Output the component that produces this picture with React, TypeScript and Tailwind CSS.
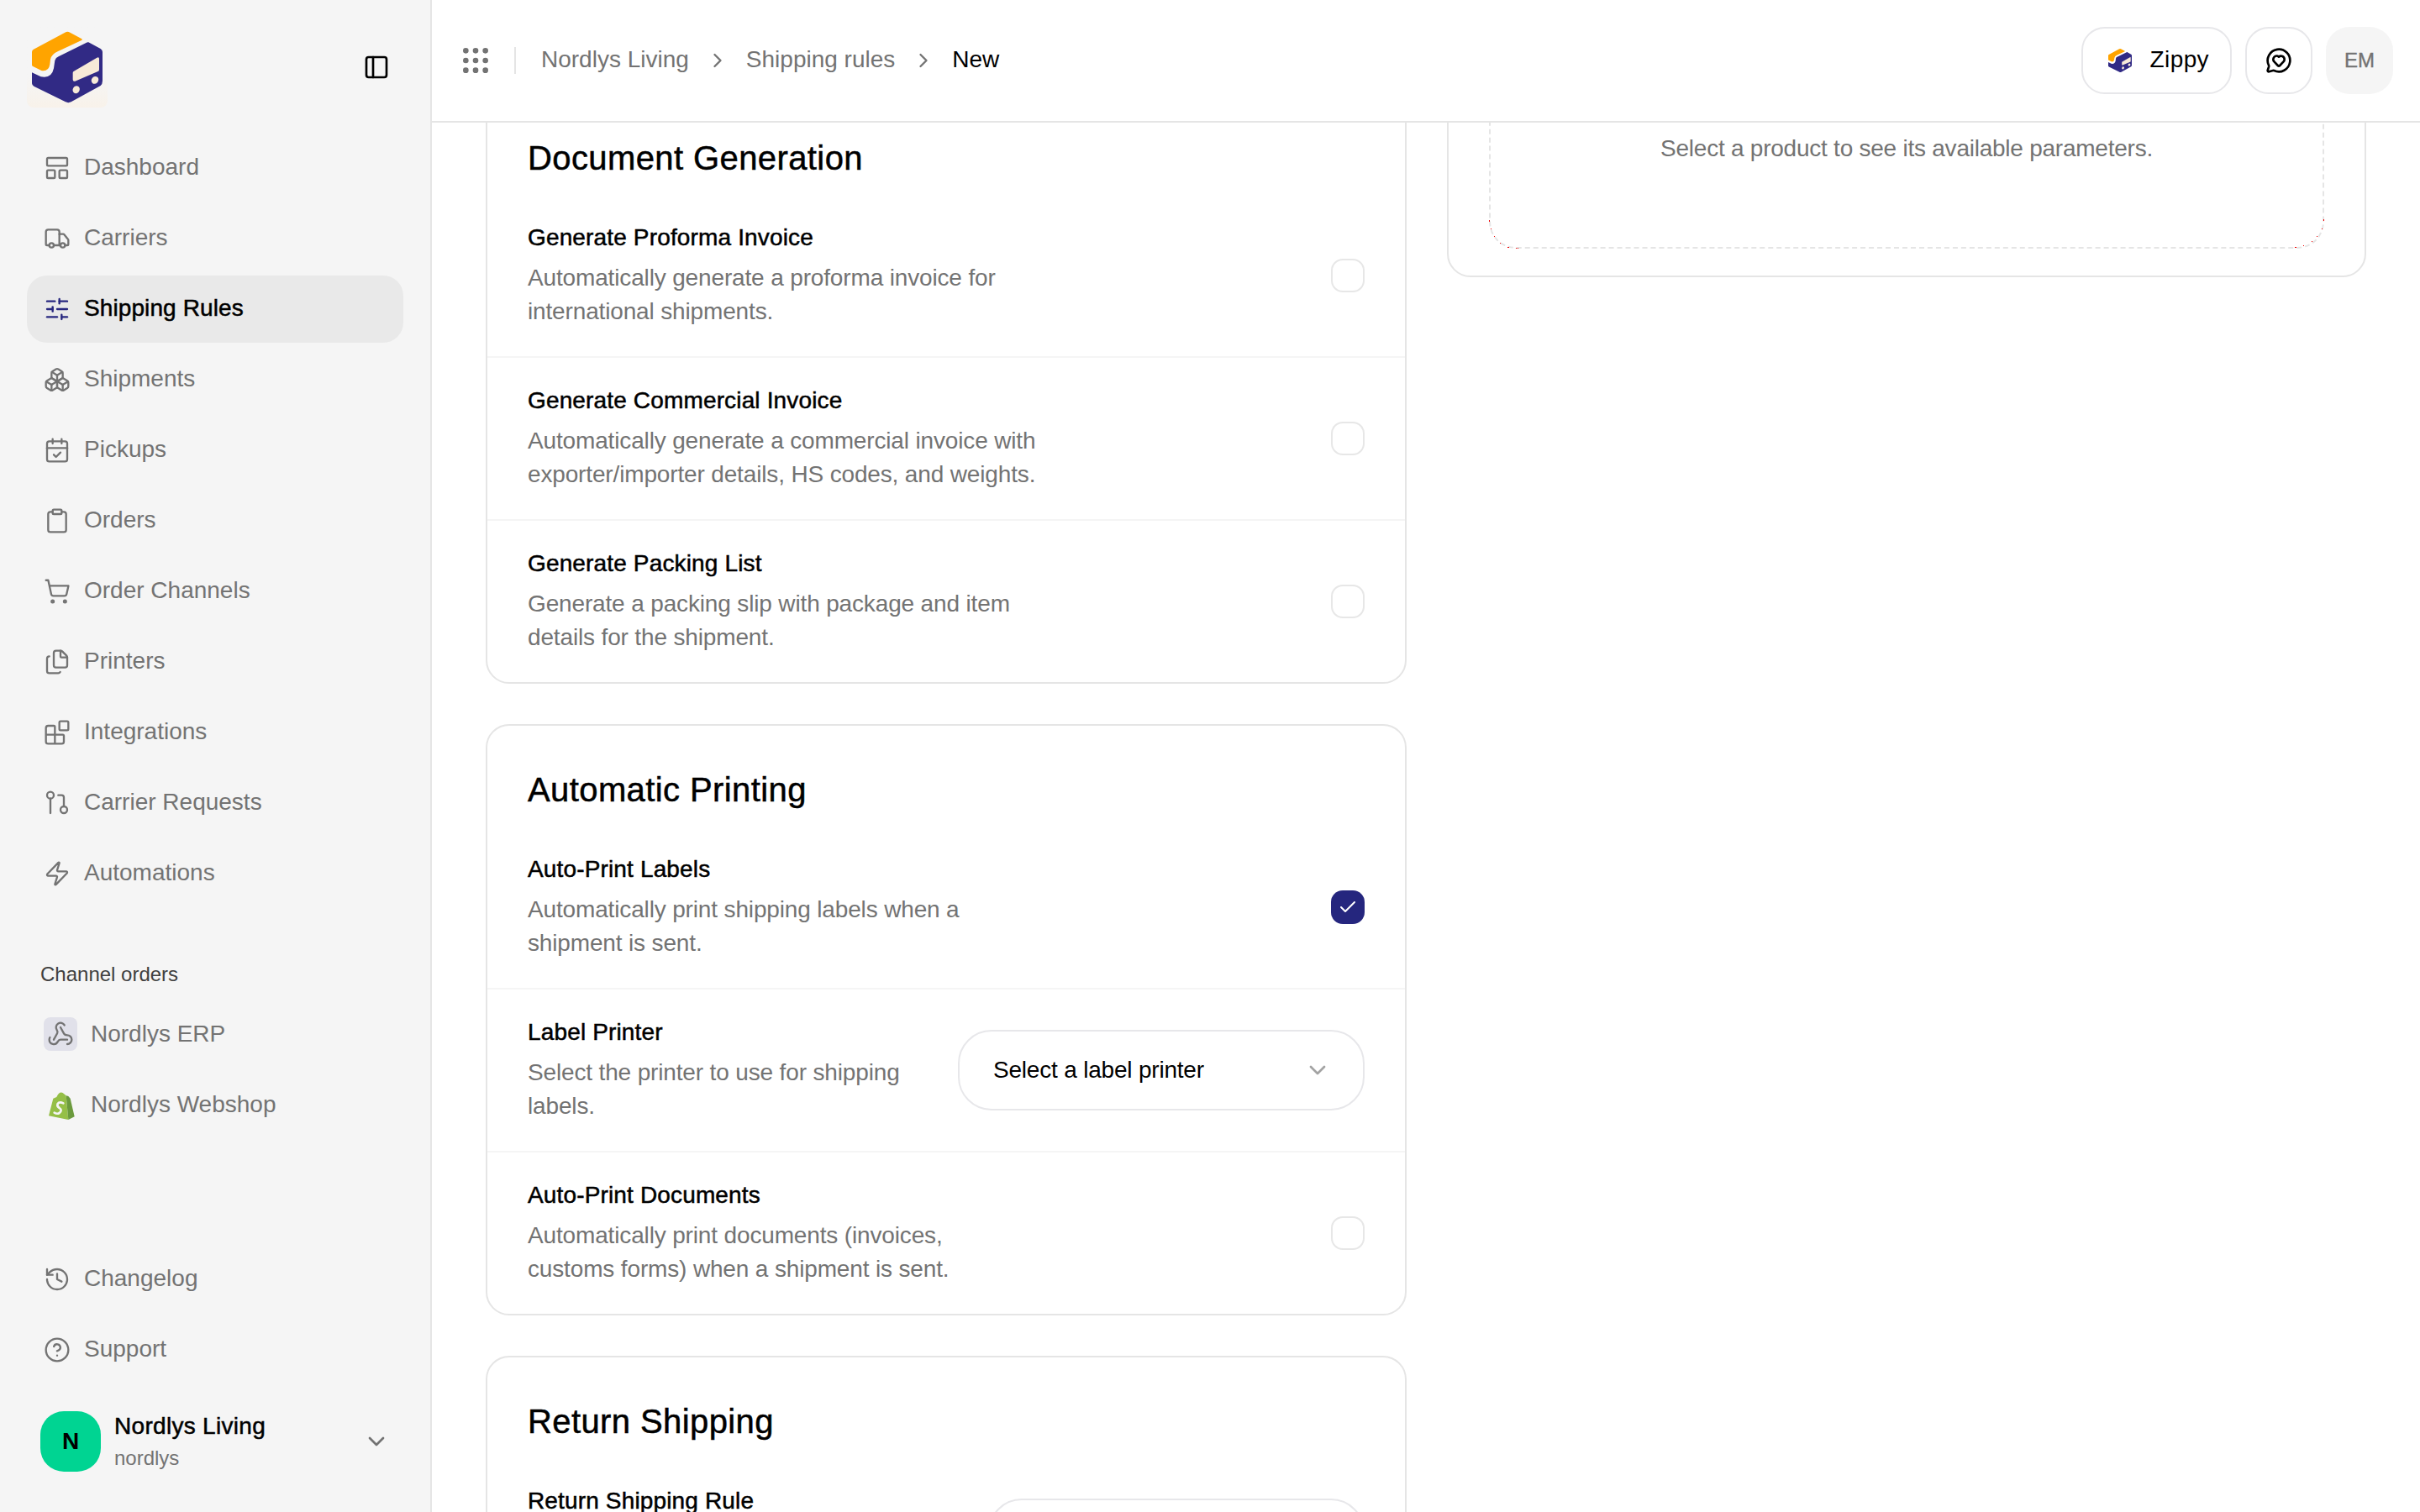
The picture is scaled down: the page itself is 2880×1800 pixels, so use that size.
import {
  Blocks,
  Boxes,
  CalendarCheck,
  Check,
  ChevronDown,
  ChevronRight,
  CircleHelp,
  Clipboard,
  Files,
  Grip,
  History,
  LayoutPanelTop,
  MessageCircleHeart,
  PanelLeft,
  ShoppingCart,
  SlidersHorizontal,
  Truck,
  Webhook,
  Zap,
} from "lucide-react";

const CarrierRequestIcon = ({ size, strokeWidth, className }: { size: number; strokeWidth: number; className?: string }) => (
  <svg width={size} height={size} viewBox="0 0 24 24" fill="none" stroke="currentColor" strokeWidth={strokeWidth} strokeLinecap="round" strokeLinejoin="round" className={className}>
    <circle cx="6" cy="5" r="3" />
    <path d="M6 8v13" />
    <path d="M13 5h3a2 2 0 0 1 2 2v8" />
    <circle cx="18" cy="18" r="3" />
  </svg>
);

const mainNav = [
  { icon: LayoutPanelTop, label: "Dashboard" },
  { icon: Truck, label: "Carriers" },
  { icon: SlidersHorizontal, label: "Shipping Rules", active: true },
  { icon: Boxes, label: "Shipments" },
  { icon: CalendarCheck, label: "Pickups" },
  { icon: Clipboard, label: "Orders" },
  { icon: ShoppingCart, label: "Order Channels" },
  { icon: Files, label: "Printers" },
  { icon: Blocks, label: "Integrations" },
  { icon: CarrierRequestIcon, label: "Carrier Requests" },
  { icon: Zap, label: "Automations" },
];

const documentRows = [
  { title: "Generate Proforma Invoice", text: "Automatically generate a proforma invoice for\ninternational shipments." },
  { title: "Generate Commercial Invoice", text: "Automatically generate a commercial invoice with\nexporter/importer details, HS codes, and weights." },
  { title: "Generate Packing List", text: "Generate a packing slip with package and item\ndetails for the shipment." },
];

const Logo = ({ size }: { size: number }) => (
  <svg width={size} height={size} viewBox="12 12 288 288" className="shrink-0">
    <path fill="#ffa400" d="M36 92 L148 32 Q157 27 166 32 L208 55 Q212 58 207 60 L122 100 Q100 110 96 128 L94 146 Q90 172 64 168 L32 152 Q30 151 30 148 L30 102 Q30 95 36 92 Z" />
    <path fill="#312a85" d="M232 67 L275 90 Q282 95 282 101 L282 205 Q282 216 275 222 L170 280 Q160 285 150 280 L37 224 Q30 220 30 214 L30 175 L62 190 Q100 198 108 160 L112 132 Q115 122 125 118 L222 70 Q228 66 232 67 Z" />
    <path fill="#f7ead8" d="M180 170 L262 122 Q270 118 270 126 L270 165 Q270 170 264 172 L184 206 Q176 208 176 200 L176 176 Q176 172 180 170 Z" />
    <ellipse fill="#f7ead8" cx="188" cy="236" rx="12" ry="14" transform="rotate(30 188 236)" />
    <ellipse fill="#f7ead8" cx="255" cy="202" rx="12" ry="14" transform="rotate(40 255 202)" />
  </svg>
);

const ShopifyLogo = () => (
  <svg width="40" height="40" viewBox="12 12 120 120" className="shrink-0">
    <path fill="#95bf47" d="M30 112 L46 50 L58 45 Q68 24 80 30 L92 40 L100 126 Z" />
    <path fill="#6b9a3d" d="M92 40 L100 42 L107 50 L122 115 L100 126 Z" />
    <path fill="none" stroke="#f5f5f5" strokeWidth="8" strokeLinecap="round" d="M82 67 Q68 60 62 69 Q58 78 68 84 Q80 92 68 102 Q60 107 50 101" />
  </svg>
);

const CornerDots = () => (
  <>
    <svg width="40" height="40" viewBox="0 0 40 40" className="absolute -bottom-0.5 -left-0.5">
      <path fill="#ef0000" d="M0 6h1v2H0zM2 16h1v1H2zM6 25h1v1H6zM13 33h1v1h-1zM22 38h2v1h-2zM32 39h1v1h-1zM34 39h1v1h-1z" />
    </svg>
    <svg width="40" height="40" viewBox="0 0 40 40" className="absolute -bottom-0.5 -right-0.5">
      <path fill="#ef0000" d="M39 5h1v2h-1zM37 16h1v1h-1zM31 25h1v1h-1zM25 31h1v1h-1zM15 36h1v1h-1zM5 38h2v1H5z" />
    </svg>
  </>
);

const NavRow = ({ icon: Icon, label, active }: { icon: any; label: string; active?: boolean }) => (
  <div className={`flex h-20 items-center gap-4 rounded-3xl px-5 ${active ? "bg-[#e9e9e9] font-medium text-black" : "text-[#737373]"}`}>
    <Icon size={32} strokeWidth={1.75} className={active ? "text-[#27277f]" : "text-[#737373]"} />
    <span className={`pb-0.5 ${active ? "tracking-[0.1px] [-webkit-text-stroke:0.5px_black]" : ""}`}>{label}</span>
  </div>
);

const Sidebar = () => (
  <aside className="flex h-full w-[514px] shrink-0 flex-col border-r-2 border-[#e5e5e5] bg-[#f5f5f5] text-[28px] leading-10">
    <div className="flex h-40 items-start justify-between pl-8 pr-12 pt-8">
      <div className="rounded-lg bg-linear-to-b from-[#f5f5f5] from-60% to-[#f8f2ea]">
        <Logo size={96} />
      </div>
      <PanelLeft size={32} strokeWidth={2} className="mt-8 text-black" />
    </div>
    <nav className="flex flex-col gap-1 px-8">
      {mainNav.map((item) => (
        <NavRow key={item.label} {...item} />
      ))}
    </nav>
    <div className="mt-[60px] px-8">
      <p className="pb-[11px] pl-4 text-2xl font-medium leading-10 text-[#404040]">Channel orders</p>
      <div className="flex flex-col gap-1">
        <div className="flex h-20 items-center gap-4 px-5 text-[#737373]">
          <span className="flex h-10 w-10 items-center justify-center rounded-lg bg-[#e1e1ea]">
            <Webhook size={32} strokeWidth={1.75} />
          </span>
          <span>Nordlys ERP</span>
        </div>
        <div className="flex h-20 items-center gap-4 px-5 text-[#737373]">
          <ShopifyLogo />
          <span>Nordlys Webshop</span>
        </div>
      </div>
    </div>
    <div className="mt-auto flex flex-col gap-1 px-8">
      <NavRow icon={History} label="Changelog" />
      <NavRow icon={CircleHelp} label="Support" />
    </div>
    <div className="mb-12 ml-12 mr-12 mt-[33px] flex h-[72px] items-center">
      <div className="flex h-[72px] w-[72px] items-center justify-center rounded-[28px] bg-[#00d492] font-bold text-black">N</div>
      <div className="ml-4 flex-1 self-start">
        <p className="leading-9 tracking-[0.3px] text-black [-webkit-text-stroke:0.5px_black]">Nordlys Living</p>
        <p className="text-2xl leading-10 text-[#737373]">nordlys</p>
      </div>
      <ChevronDown size={32} className="text-[#737373]" />
    </div>
  </aside>
);

const Header = () => (
  <header className="flex h-[146px] shrink-0 items-center border-b-2 border-[#e5e5e5] bg-white pl-8 pr-8 text-[28px]">
    <Grip size={40} strokeWidth={2} className="text-[#737373]" />
    <div className="ml-[26px] h-8 w-0.5 bg-[#e5e5e5]" />
    <span className="ml-[30px] pb-0.5 text-[#737373]">Nordlys Living</span>
    <ChevronRight size={28} className="mx-5 text-[#737373]" />
    <span className="pb-0.5 text-[#737373]">Shipping rules</span>
    <ChevronRight size={28} className="mx-5 text-[#737373]" />
    <span className="pb-0.5 text-black">New</span>
    <div className="ml-auto flex items-center gap-4">
      <div className="flex h-20 items-center gap-5 rounded-[28px] border-2 border-[#e7e7ea] pl-7 pr-[25px] text-black">
        <Logo size={32} />
        <span className="pb-0.5 tracking-[0.4px]">Zippy</span>
      </div>
      <div className="flex h-20 w-20 items-center justify-center rounded-[28px] border-2 border-[#e7e7ea]">
        <MessageCircleHeart size={32} className="text-black" />
      </div>
      <div className="flex h-20 w-20 items-center justify-center rounded-[28px] bg-[#f5f5f5] text-2xl font-medium text-[#737373] [-webkit-text-stroke:0.4px_#737373]">EM</div>
    </div>
  </header>
);

const Checkbox = ({ checked }: { checked?: boolean }) =>
  checked ? (
    <span className="flex h-10 w-10 shrink-0 items-center justify-center rounded-[14px] bg-[#25267e]">
      <Check size={24} strokeWidth={2} className="text-white" />
    </span>
  ) : (
    <span className="h-10 w-10 shrink-0 rounded-[14px] border-2 border-[#e7e7e7]" />
  );

const Select = ({ label, className }: { label?: string; className: string }) => (
  <div className={`flex h-24 shrink-0 items-center justify-between rounded-[40px] border-2 border-[#e7e7ea] pl-10 pr-[38px] ${className}`}>
    <span className="tracking-[-0.2px] text-black">{label}</span>
    <ChevronDown size={32} className="text-[#a3a3a3]" />
  </div>
);

const Row = ({ title, text, children }: { title: string; text?: string; children: React.ReactNode }) => (
  <div className="flex min-h-[192px] items-center justify-between border-b-2 border-[#f5f5f5] px-12 py-8 last:border-b-0">
    <div className="-mt-px mb-px self-start">
      <p className="font-medium leading-10 tracking-[0.15px] text-black [-webkit-text-stroke:0.5px_black]">{title}</p>
      {text && <p className="mt-2 whitespace-pre-line leading-10 tracking-[-0.15px] text-[#737373]">{text}</p>}
    </div>
    {children}
  </div>
);

const Card = ({ title, children }: { title: string; children: React.ReactNode }) => (
  <section className="rounded-[28px] border-2 border-[#e5e5e5] bg-white text-[28px]">
    <h2 className="h-[120px] px-12 pt-12 text-[40px] font-medium leading-[56px] tracking-[0.4px] text-black [-webkit-text-stroke:0.5px_black]">{title}</h2>
    {children}
  </section>
);

const App = () => (
  <div className="flex h-screen w-screen overflow-hidden bg-white font-['Liberation_Sans',sans-serif]">
    <Sidebar />
    <div className="flex min-w-0 flex-1 flex-col">
      <Header />
      <main className="flex-1 overflow-hidden">
        <div className="-mt-9 grid grid-cols-[1096px_1094px] items-start gap-12 px-16">
          <div className="flex flex-col gap-12">
            <Card title="Document Generation">
              {documentRows.map((row) => (
                <Row key={row.title} {...row}>
                  <Checkbox />
                </Row>
              ))}
            </Card>
            <Card title="Automatic Printing">
              <Row title="Auto-Print Labels" text={"Automatically print shipping labels when a\nshipment is sent."}>
                <Checkbox checked />
              </Row>
              <Row title="Label Printer" text={"Select the printer to use for shipping\nlabels."}>
                <Select label="Select a label printer" className="w-[484px]" />
              </Row>
              <Row title="Auto-Print Documents" text={"Automatically print documents (invoices,\ncustoms forms) when a shipment is sent."}>
                <Checkbox />
              </Row>
            </Card>
            <Card title="Return Shipping">
              <Row title="Return Shipping Rule">
                <Select className="w-[448px]" />
              </Row>
            </Card>
          </div>
          <section className="-mt-[104px] rounded-[28px] border-2 border-[#e5e5e5] bg-white px-12 pb-8 pt-12 text-[28px]">
            <div className="relative flex h-60 items-center justify-center rounded-[32px] border-2 border-dashed border-[#e5e5e5] tracking-[-0.24px] text-[#737373]">
              <span className="pt-0.5">Select a product to see its available parameters.</span>
              <CornerDots />
            </div>
          </section>
        </div>
      </main>
    </div>
  </div>
);

export default App;
